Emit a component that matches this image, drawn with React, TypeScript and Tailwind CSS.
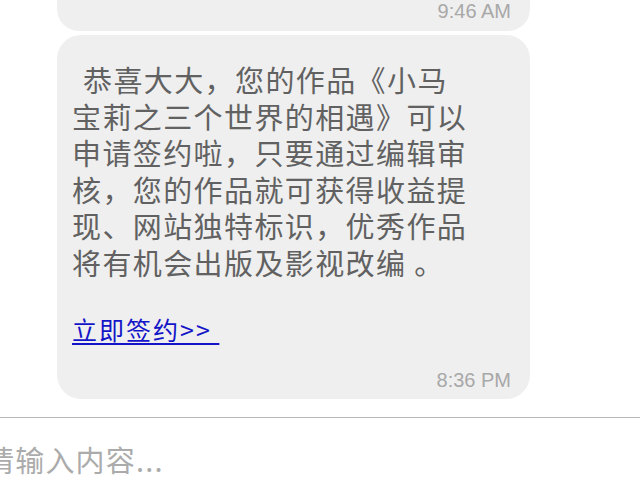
import React from "react";

const lines = [
  "宝莉之三个世界的相遇》可以",
  "申请签约啦，只要通过编辑审",
  "核，您的作品就可获得收益提",
  "现、网站独特标识，优秀作品",
  "将有机会出版及影视改编 。",
];

export default function App() {
  const cjk = { fontFamily: '"Noto Sans CJK SC", "Noto Sans", sans-serif' };
  const latin = { fontFamily: '"Liberation Sans", Arial, sans-serif' };
  return (
    <div className="w-[640px] h-[503px] bg-white overflow-hidden">
      <div className="pl-[57px] pr-[110px]">
        <div className="mt-[-40px] h-[71px] rounded-[22px] bg-[#efefef] flex items-end justify-end pr-[19px] pb-[10px]">
          <div className="text-[20px] leading-[20px] text-[#a8a8a8]" style={latin}>
            9:46 AM
          </div>
        </div>
        <div className="mt-[4px] rounded-[24px] bg-[#efefef] pt-[26px] pl-[15px] pr-[19px] pb-[9px]">
          <div className="text-[29px] leading-[36.5px] tracking-[1.4px] text-[#616161] whitespace-nowrap" style={cjk}>
            <div>
              <span className="inline-block w-[11px]" />
              恭喜大大，您的作品《小马
            </div>
            {lines.map((l) => (
              <div key={l}>{l}</div>
            ))}
          </div>
          <div className="mt-[35px] text-[25px] leading-[28px] tracking-[2px]" style={cjk}>
            <span className="text-[#1414c8] underline underline-offset-[3px] whitespace-pre">立即签约&gt;&gt; </span>
          </div>
          <div className="mt-[27px] flex justify-end">
            <div className="text-[20px] leading-[20px] text-[#a8a8a8]" style={latin}>
              8:36 PM
            </div>
          </div>
        </div>
      </div>
      <div className="mt-[18px] border-t border-[#b8b8b8]">
        <div className="mt-[23px] ml-[-15px] text-[29px] leading-[36.5px] tracking-[1.2px] text-[#ababab] whitespace-nowrap" style={cjk}>
          请输入内容...
        </div>
      </div>
    </div>
  );
}
